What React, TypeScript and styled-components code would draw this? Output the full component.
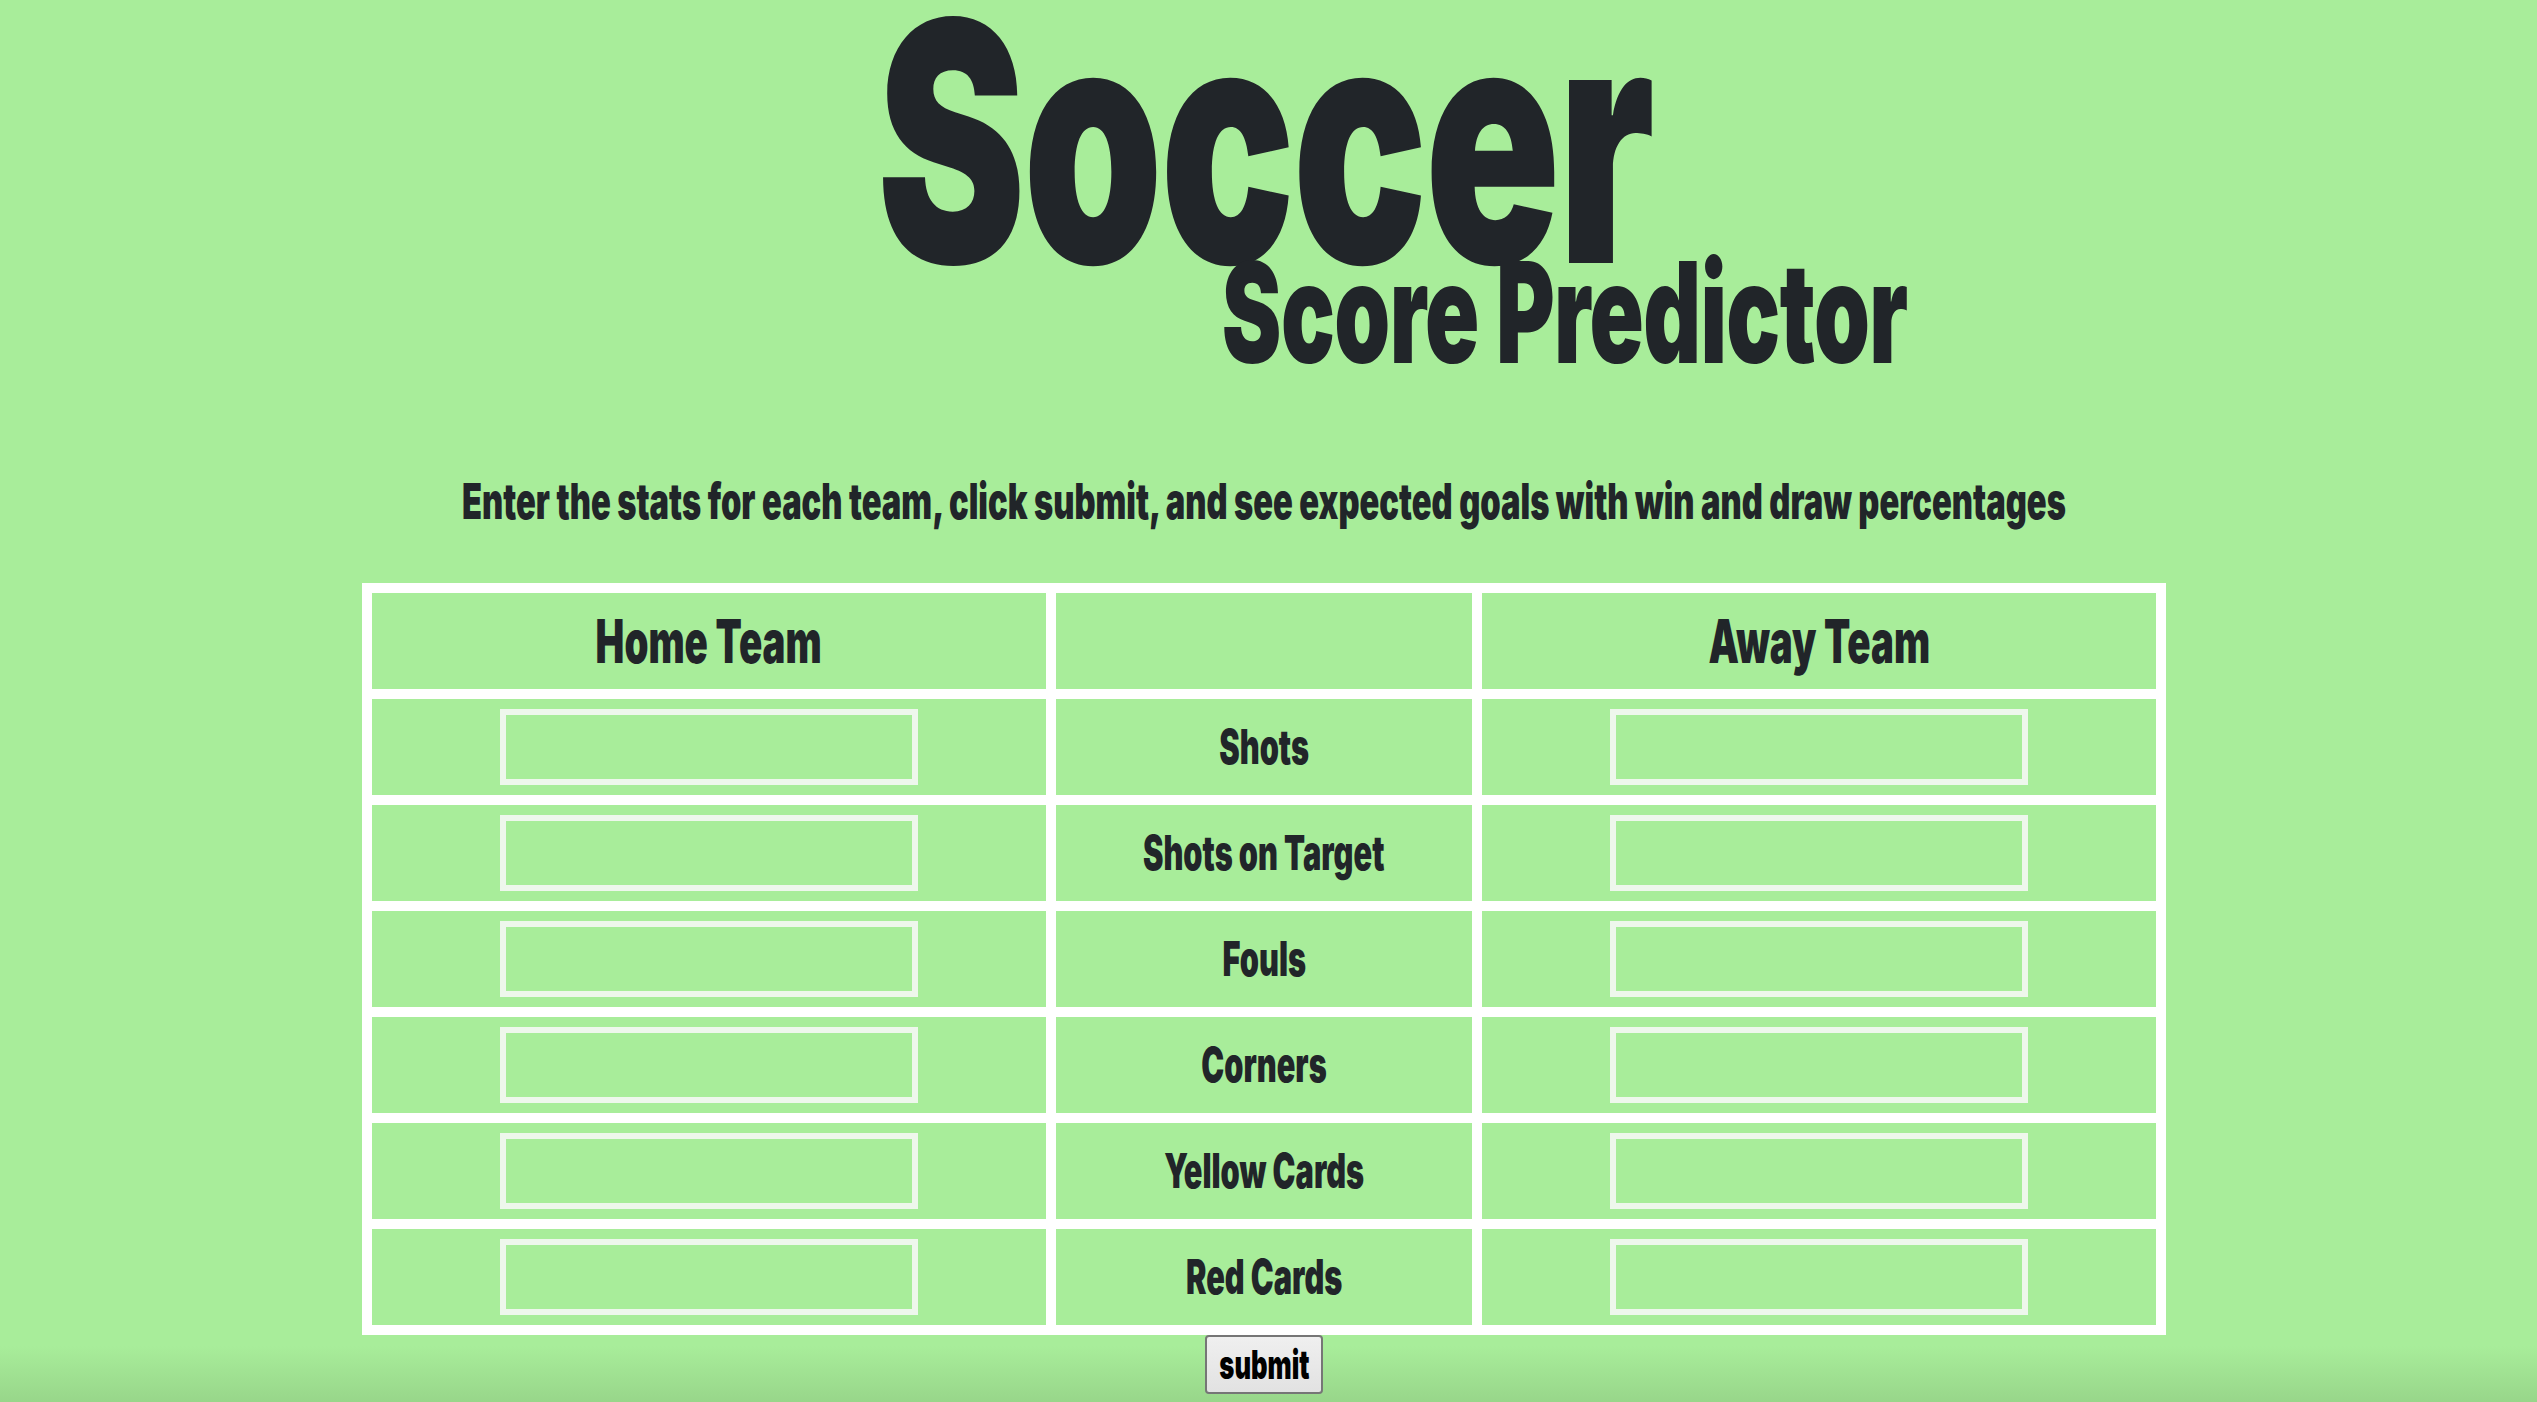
import React from "react";
import styled, { createGlobalStyle } from "styled-components";

const GlobalStyle = createGlobalStyle`
  html, body { margin: 0; padding: 0; }
  body { font-family: Inter, "Liberation Sans", sans-serif; color: #212529; }
`;

const SX = 0.64;

const Page = styled.main`
  box-sizing: border-box;
  min-height: 100vh;
  padding-right: 9px;
  overflow: hidden;
  display: flex;
  flex-direction: column;
  align-items: center;
  background: linear-gradient(to bottom, #a8ed9a 0, #a8ed9a calc(100% - 56px), #98d68a 100%);
`;

const Title = styled.h1`
  margin: 0;
  font-size: 335px;
  line-height: 282px;
  font-weight: 900;
  letter-spacing: -4px;
  white-space: nowrap;
  transform: scaleX(0.668);
  transform-origin: center;
`;

const SubTitle = styled.h2`
  margin: 0 0 0 602px;
  font-size: 140px;
  line-height: 61px;
  font-weight: 900;
  letter-spacing: -1px;
  white-space: nowrap;
  transform: scaleX(${SX});
  transform-origin: center;
`;

const Intro = styled.p`
  margin: 128px 0 0;
  font-size: 50px;
  line-height: 60px;
  font-weight: 900;
  white-space: nowrap;
  transform: scaleX(0.653);
  transform-origin: center;
`;

const Board = styled.table`
  margin-top: 52px;
  width: 1804px;
  table-layout: fixed;
  border-collapse: separate;
  border-spacing: 10px;
  background: #ffffff;
`;

const Col = styled.col<{ $w: number }>`
  width: ${(p) => p.$w}px;
`;

const Cell = styled.td`
  height: 96px;
  padding: 0;
  background: #a8ed9a;
  vertical-align: middle;
`;

const HeadCell = styled.th`
  height: 96px;
  padding: 0;
  background: #a8ed9a;
  vertical-align: middle;
`;

const Center = styled.div`
  display: flex;
  justify-content: center;
  align-items: center;
  height: 100%;
`;

const HeadText = styled.span`
  font-size: 60px;
  line-height: 70px;
  font-weight: 900;
  white-space: nowrap;
  transform: scaleX(${SX});
  transform-origin: center;
`;

const Label = styled.span`
  font-size: 48px;
  line-height: 56px;
  font-weight: 900;
  white-space: nowrap;
  transform: scaleX(${SX});
  transform-origin: center;
`;

const StatInput = styled.input`
  display: block;
  box-sizing: border-box;
  width: 418px;
  height: 76px;
  padding: 0 10px;
  border: 6px solid #eef7ec;
  border-radius: 0;
  background: transparent;
  outline: none;
  font-family: inherit;
  font-size: 32px;
`;

const Submit = styled.button`
  box-sizing: border-box;
  width: 118px;
  height: 59px;
  margin: 0;
  padding: 0;
  display: flex;
  justify-content: center;
  align-items: center;
  border: 2px solid #767676;
  border-radius: 4px;
  background: linear-gradient(to bottom, #efefef, #e2e2e2);
  color: #000;
  cursor: pointer;
`;

const SubmitText = styled.span`
  font-family: Inter, "Liberation Sans", sans-serif;
  font-size: 40px;
  line-height: 48px;
  font-weight: 900;
  white-space: nowrap;
  transform: scaleX(${SX});
  transform-origin: center;
`;

const stats = ["Shots", "Shots on Target", "Fouls", "Corners", "Yellow Cards", "Red Cards"];

export default function App() {
  return (
    <>
      <GlobalStyle />
      <Page>
        <Title>Soccer</Title>
        <SubTitle>Score Predictor</SubTitle>
        <Intro>
          Enter the stats for each team, click submit, and see expected goals with win and draw percentages
        </Intro>
        <Board>
          <colgroup>
            <Col $w={674} />
            <Col $w={416} />
            <Col $w={674} />
          </colgroup>
          <thead>
            <tr>
              <HeadCell>
                <Center>
                  <HeadText>Home Team</HeadText>
                </Center>
              </HeadCell>
              <HeadCell />
              <HeadCell>
                <Center>
                  <HeadText>Away Team</HeadText>
                </Center>
              </HeadCell>
            </tr>
          </thead>
          <tbody>
            {stats.map((s) => (
              <tr key={s}>
                <Cell>
                  <Center>
                    <StatInput type="text" aria-label={`Home ${s}`} />
                  </Center>
                </Cell>
                <Cell>
                  <Center>
                    <Label>{s}</Label>
                  </Center>
                </Cell>
                <Cell>
                  <Center>
                    <StatInput type="text" aria-label={`Away ${s}`} />
                  </Center>
                </Cell>
              </tr>
            ))}
          </tbody>
        </Board>
        <Submit type="button">
          <SubmitText>submit</SubmitText>
        </Submit>
      </Page>
    </>
  );
}
